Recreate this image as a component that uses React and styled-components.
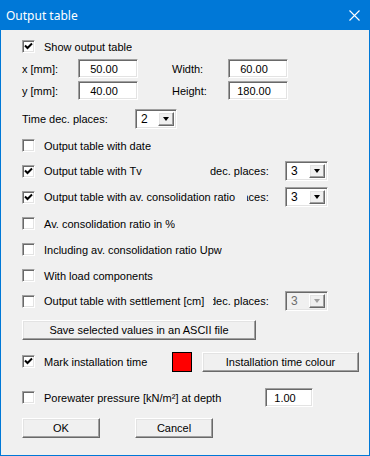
import React from 'react'
import styled, { createGlobalStyle } from 'styled-components'

const Global = createGlobalStyle`
  html, body { margin: 0; padding: 0; background: #fff; }
  body { font-family: "Liberation Sans", Arial, sans-serif; font-size: 11px; color: #000; }
`

const Window = styled.div`
  width: 370px;
  height: 456px;
  box-sizing: border-box;
  display: flex;
  flex-direction: column;
  background: #f0f0f0;
  border: 1px solid #0078d7;
  border-top: none;
  overflow: hidden;
`

const TitleBar = styled.div`
  height: 30px;
  margin: 0 -1px;
  background: #0078d7;
  display: flex;
  align-items: center;
  justify-content: space-between;
  padding: 0 10px 0 6px;
  color: #fff;
  font-family: "Noto Sans", "Open Sans", sans-serif;
  font-size: 12px;
  flex-shrink: 0;
`

const Body = styled.div`
  display: flex;
  flex-direction: column;
  padding: 10px 0 0 21px;
`

const Row = styled.div`
  display: flex;
  align-items: center;
  height: ${p => p.$h}px;
  margin-top: ${p => p.$mt || 0}px;
`

const Grid = styled.div`
  display: grid;
  grid-template-columns: 56px 60px 34px 56px 60px;
  align-items: center;
  height: 19px;
  margin-top: ${p => p.$mt || 0}px;
`

const Label = styled.span`
  white-space: nowrap;
  width: ${p => (p.$w ? `${p.$w}px` : 'auto')};
  flex-shrink: 0;
`

// the "dec. places:" label sits partly under the checkbox control to its left
const ClipLabel = styled.div`
  width: ${p => 75 - p.$clip}px;
  overflow: hidden;
  white-space: nowrap;
  flex-shrink: 0;
  span { display: inline-block; margin-left: ${p => -p.$clip}px; }
`

const sunken = `
  box-sizing: border-box;
  border: 1px solid;
  border-color: #a0a0a0 #fff #fff #a0a0a0;
  box-shadow: inset 1px 1px 0 #696969, inset -1px -1px 0 #e3e3e3;
`

const raised = `
  box-sizing: border-box;
  border: 1px solid;
  border-color: #fff #696969 #696969 #fff;
  box-shadow: inset -1px -1px 0 #a0a0a0, inset 1px 1px 0 #e3e3e3;
  background: #f0f0f0;
`

const Field = styled.div`
  ${sunken}
  width: ${p => p.$w}px;
  height: 19px;
  background: #fff;
  display: flex;
  align-items: center;
  justify-content: center;
  padding-right: 8px;
`

const CheckBoxCell = styled.label`
  display: flex;
  align-items: center;
  gap: 9px;
  width: ${p => (p.$w ? `${p.$w}px` : 'auto')};
  overflow: hidden;
  white-space: nowrap;
  flex-shrink: 0;
`

const Box = styled.span`
  ${sunken}
  width: 13px;
  height: 13px;
  background: #fff;
  flex-shrink: 0;
  display: flex;
  align-items: center;
  justify-content: center;
`

const Select = styled.div`
  ${sunken}
  width: ${p => p.$w || 43}px;
  height: 20px;
  background: ${p => (p.$disabled ? '#f0f0f0' : '#fff')};
  color: ${p => (p.$disabled ? '#6d6d6d' : '#000')};
  display: flex;
  align-items: stretch;
  padding: 2px;
`

const SelectValue = styled.span`
  flex: 1;
  display: flex;
  align-items: center;
  padding-left: 3px;
  font-size: 12px;
`

const SelectBtn = styled.span`
  ${raised}
  width: 16px;
  display: flex;
  align-items: center;
  justify-content: center;
  &::after {
    content: '';
    border-left: 3.5px solid transparent;
    border-right: 3.5px solid transparent;
    border-top: 4px solid ${p => (p.$disabled ? '#a0a0a0' : '#000')};
  }
`

const Button = styled.button`
  ${raised}
  width: ${p => p.$w}px;
  height: ${p => p.$h || 20}px;
  margin-left: ${p => p.$ml || 0}px;
  padding: 0;
  font-family: "Liberation Sans", Arial, sans-serif;
  font-size: 11px;
  color: #000;
`

const Swatch = styled.span`
  width: 20px;
  height: 20px;
  box-sizing: border-box;
  background: #ff0000;
  border: 1px solid #000;
  flex-shrink: 0;
`

const Check = ({ on }) => (
  <Box>
    {on && (
      <svg width="9" height="9" viewBox="0 0 9 9">
        <path d="M1 3.5 L3.5 6 L8 1.5" fill="none" stroke="#000" strokeWidth="2" />
      </svg>
    )}
  </Box>
)

const CheckBox = ({ on, w, children }) => (
  <CheckBoxCell $w={w}>
    <Check on={on} />
    <span>{children}</span>
  </CheckBoxCell>
)

const Drop = ({ value, disabled, w }) => (
  <Select $disabled={disabled} $w={w}>
    <SelectValue>{value}</SelectValue>
    <SelectBtn $disabled={disabled} />
  </Select>
)

const Close = () => (
  <svg width="11" height="11" viewBox="0 0 11 11">
    <path d="M0.5 0.5 L10.5 10.5 M10.5 0.5 L0.5 10.5" stroke="#fff" strokeWidth="1.1" />
  </svg>
)

export default function App() {
  return (
    <>
      <Global />
      <Window>
        <TitleBar>
          <span>Output table</span>
          <Close />
        </TitleBar>
        <Body>
          <Row $h={13}>
            <CheckBox on>Show output table</CheckBox>
          </Row>
          <Grid $mt={6}>
            <Label>x [mm]:</Label>
            <Field $w={60}>50.00</Field>
            <span />
            <Label>Width:</Label>
            <Field $w={60}>60.00</Field>
          </Grid>
          <Grid $mt={3}>
            <Label>y [mm]:</Label>
            <Field $w={60}>40.00</Field>
            <span />
            <Label>Height:</Label>
            <Field $w={60}>180.00</Field>
          </Grid>
          <Row $h={20} $mt={9}>
            <Label $w={113}>Time dec. places:</Label>
            <Drop value="2" w={42} />
          </Row>
          <Row $h={13} $mt={10}>
            <CheckBox>Output table with date</CheckBox>
          </Row>
          <Row $h={20} $mt={9}>
            <CheckBox on w={188}>Output table with Tv</CheckBox>
            <ClipLabel $clip={0}><span>dec. places:</span></ClipLabel>
            <Drop value="3" />
          </Row>
          <Row $h={20} $mt={6}>
            <CheckBox on w={225}>Output table with av. consolidation ratio</CheckBox>
            <ClipLabel $clip={37}><span>dec. places:</span></ClipLabel>
            <Drop value="3" />
          </Row>
          <Row $h={13} $mt={10}>
            <CheckBox>Av. consolidation ratio in %</CheckBox>
          </Row>
          <Row $h={13} $mt={13}>
            <CheckBox>Including av. consolidation ratio Upw</CheckBox>
          </Row>
          <Row $h={13} $mt={13}>
            <CheckBox>With load components</CheckBox>
          </Row>
          <Row $h={20} $mt={9}>
            <CheckBox w={191}>Output table with settlement [cm]</CheckBox>
            <ClipLabel $clip={3}><span>dec. places:</span></ClipLabel>
            <Drop value="3" disabled />
          </Row>
          <Row $h={20} $mt={9}>
            <Button $w={234}>Save selected values in an ASCII file</Button>
          </Row>
          <Row $h={21} $mt={11}>
            <CheckBox on w={150}>Mark installation time</CheckBox>
            <Swatch />
            <Button $w={157} $ml={10}>Installation time colour</Button>
          </Row>
          <Row $h={19} $mt={16}>
            <CheckBox w={243}>Porewater pressure [kN/m²] at depth</CheckBox>
            <Field $w={48}>1.00</Field>
          </Row>
          <Row $h={20} $mt={11}>
            <Button $w={78}>OK</Button>
            <Button $w={78} $ml={35}>Cancel</Button>
          </Row>
        </Body>
      </Window>
    </>
  )
}
